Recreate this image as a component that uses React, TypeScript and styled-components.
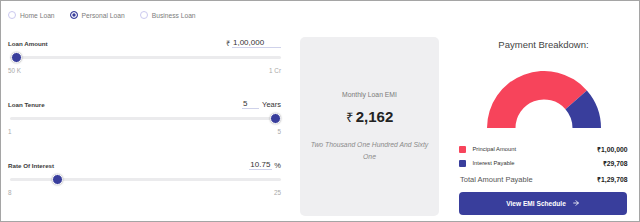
import React, { useState } from "react";
import styled, { createGlobalStyle } from "styled-components";
import { ArrowRight } from "lucide-react";

const GlobalStyle = createGlobalStyle`
  html, body { margin: 0; padding: 0; background: #ffffff; }
  body { font-family: "Liberation Sans", Arial, sans-serif; }
  * { box-sizing: border-box; }
`;

const BLUE = "#393e9c";
const RED = "#f7445b";

const Frame = styled.div`
  width: 640px;
  height: 222px;
  border: 1px solid #a5a5a5;
  padding: 9px 11px 0 7px;
  display: flex;
  flex-direction: column;
  gap: 17px;
  background: #fff;
  overflow: hidden;
`;

const RadioRow = styled.div`
  display: flex;
  align-items: center;
  height: 10px;
  gap: 15px;
  flex-shrink: 0;
`;

const RadioOption = styled.label`
  display: flex;
  align-items: center;
  gap: 4px;
  font-size: 6.7px;
  color: #7c7c7c;
  cursor: pointer;
`;

const RadioDot = styled.span<{ $checked: boolean }>`
  width: 8px;
  height: 8px;
  border-radius: 50%;
  border: ${(p) => (p.$checked ? `1.5px solid ${BLUE}` : "1px solid #cbc9ef")};
  background: ${(p) => (p.$checked ? BLUE : "#fff")};
  box-shadow: ${(p) => (p.$checked ? "inset 0 0 0 1.3px #fff" : "none")};
`;

const Main = styled.div`
  display: flex;
  height: 179px;
  flex-shrink: 0;
`;

const LeftCol = styled.div`
  width: 273px;
  padding-top: 1px;
  display: flex;
  flex-direction: column;
`;

const Section = styled.div`
  height: 61px;
  flex-shrink: 0;
  display: flex;
  flex-direction: column;
`;

const Header = styled.div`
  height: 10px;
  display: flex;
  align-items: center;
  justify-content: space-between;
`;

const FieldLabel = styled.span`
  font-size: 6.2px;
  font-weight: 700;
  color: #3a3a3a;
`;

const ValueGroup = styled.div<{ $gap: number }>`
  display: flex;
  align-items: center;
  height: 10px;
  gap: ${(p) => p.$gap}px;
`;

const ValueField = styled.span<{ $width: number }>`
  width: ${(p) => p.$width}px;
  height: 10px;
  border-bottom: 1px solid #cfd2ea;
  font-size: 8px;
  line-height: 9px;
  color: #333;
  padding-left: 1px;
`;

const Unit = styled.span`
  font-size: 7.5px;
  color: #333;
`;

const Rupee = styled.span`
  font-size: 7.5px;
  color: #333;
`;

const Slider = styled.input`
  -webkit-appearance: none;
  appearance: none;
  display: block;
  margin: 4px 0 0 1.5px;
  width: calc(100% - 1.5px);
  height: 11px;
  background: transparent;
  outline: none;

  &::-webkit-slider-runnable-track {
    height: 3px;
    background: #ebebed;
    border-radius: 2px;
  }
  &::-webkit-slider-thumb {
    -webkit-appearance: none;
    width: 11px;
    height: 11px;
    margin-top: -4px;
    border-radius: 50%;
    background: ${BLUE};
    border: 1.5px solid #fff;
    box-shadow: 0 0 2px rgba(0, 0, 0, 0.35);
  }
`;

const RangeLabels = styled.div`
  margin-top: 4px;
  height: 8px;
  display: flex;
  justify-content: space-between;
  font-size: 6.3px;
  line-height: 8px;
  color: #a9a9a9;
`;

const EmiCard = styled.div`
  width: 139px;
  height: 179px;
  margin-left: 19px;
  background: #efeff1;
  border-radius: 5px;
  display: flex;
  flex-direction: column;
  align-items: center;
  justify-content: center;
  text-align: center;
  padding: 0 8px;
`;

const EmiLabel = styled.div`
  font-size: 6.8px;
  line-height: 9px;
  color: #7a7a7a;
`;

const EmiAmount = styled.div`
  margin-top: 9px;
  font-size: 15px;
  line-height: 18px;
  font-weight: 700;
  color: #222;
`;

const EmiRupee = styled.span`
  font-weight: 400;
  font-size: 13px;
  margin-right: 3px;
`;

const EmiWords = styled.div`
  margin-top: 12px;
  font-size: 6.8px;
  line-height: 11.7px;
  font-style: italic;
  color: #8a8a8a;
`;

const RightCol = styled.div`
  width: 169px;
  margin-left: 20px;
  display: flex;
  flex-direction: column;
`;

const Title = styled.div`
  margin-top: 1.5px;
  text-align: center;
  font-size: 9.5px;
  line-height: 12px;
  color: #444;
`;

const DonutSvg = styled.svg`
  display: block;
  margin: 20px auto 0;
`;

const LegendRow = styled.div<{ $top: number; $height?: number }>`
  margin-top: ${(p) => p.$top}px;
  height: ${(p) => p.$height ?? 10}px;
  display: flex;
  align-items: center;
`;

const Swatch = styled.span<{ $color: string }>`
  width: 7px;
  height: 7px;
  border-radius: 1px;
  background: ${(p) => p.$color};
  margin-left: -0.5px;
`;

const LegendLabel = styled.span`
  flex: 1;
  margin-left: 7px;
  font-size: 5.8px;
  color: #333;
`;

const TotalLabel = styled.span`
  flex: 1;
  margin-left: 1px;
  font-size: 7.5px;
  color: #555;
`;

const LegendValue = styled.span`
  font-size: 6.8px;
  font-weight: 700;
  color: #222;
  margin-right: 0.5px;
`;

const ScheduleButton = styled.button`
  margin-top: 6.7px;
  width: 168px;
  height: 23px;
  border: none;
  border-radius: 4px;
  background: ${BLUE};
  color: #fff;
  font-family: "Liberation Sans", Arial, sans-serif;
  font-size: 6.6px;
  font-weight: 700;
  display: flex;
  align-items: center;
  justify-content: center;
  gap: 6px;
  cursor: pointer;
  padding: 0;
`;

type LoanType = "home" | "personal" | "business";

const loanTypes: { id: LoanType; label: string }[] = [
  { id: "home", label: "Home Loan" },
  { id: "personal", label: "Personal Loan" },
  { id: "business", label: "Business Loan" },
];

function arcPoint(cx: number, cy: number, r: number, deg: number) {
  const a = (deg * Math.PI) / 180;
  return [cx + r * Math.cos(a), cy - r * Math.sin(a)];
}

function ringSegment(cx: number, cy: number, R: number, r: number, from: number, to: number) {
  const [x1, y1] = arcPoint(cx, cy, R, from);
  const [x2, y2] = arcPoint(cx, cy, R, to);
  const [x3, y3] = arcPoint(cx, cy, r, to);
  const [x4, y4] = arcPoint(cx, cy, r, from);
  return `M${x1} ${y1} A${R} ${R} 0 0 1 ${x2} ${y2} L${x3} ${y3} A${r} ${r} 0 0 0 ${x4} ${y4} Z`;
}

const HalfDonut: React.FC<{ principal: number; interest: number }> = ({ principal, interest }) => {
  const R = 57;
  const r = 28.5;
  const split = 180 - (principal / (principal + interest)) * 180;
  return (
    <DonutSvg width={114} height={57} viewBox="0 0 114 57">
      <path d={ringSegment(57, 57, R, r, 180, split)} fill={RED} />
      <path d={ringSegment(57, 57, R, r, split, 0)} fill={BLUE} />
    </DonutSvg>
  );
};

export default function App() {
  const [loanType, setLoanType] = useState<LoanType>("personal");
  const [amount, setAmount] = useState(100000);
  const [tenure, setTenure] = useState(5);
  const [rate, setRate] = useState(10.75);

  return (
    <>
      <GlobalStyle />
      <Frame>
        <RadioRow>
          {loanTypes.map((t) => (
            <RadioOption key={t.id} onClick={() => setLoanType(t.id)}>
              <RadioDot $checked={loanType === t.id} />
              {t.label}
            </RadioOption>
          ))}
        </RadioRow>
        <Main>
          <LeftCol>
            <Section>
              <Header>
                <FieldLabel>Loan Amount</FieldLabel>
                <ValueGroup $gap={2}>
                  <Rupee>₹</Rupee>
                  <ValueField $width={49}>1,00,000</ValueField>
                </ValueGroup>
              </Header>
              <Slider
                type="range"
                min={50000}
                max={10000000}
                step={1000}
                value={amount}
                onChange={(e) => setAmount(Number(e.target.value))}
              />
              <RangeLabels>
                <span>50 K</span>
                <span>1 Cr</span>
              </RangeLabels>
            </Section>
            <Section>
              <Header>
                <FieldLabel>Loan Tenure</FieldLabel>
                <ValueGroup $gap={3}>
                  <ValueField $width={17}>5</ValueField>
                  <Unit>Years</Unit>
                </ValueGroup>
              </Header>
              <Slider
                type="range"
                min={1}
                max={5}
                step={1}
                value={tenure}
                onChange={(e) => setTenure(Number(e.target.value))}
              />
              <RangeLabels>
                <span>1</span>
                <span>5</span>
              </RangeLabels>
            </Section>
            <Section>
              <Header>
                <FieldLabel>Rate Of Interest</FieldLabel>
                <ValueGroup $gap={2}>
                  <ValueField $width={23}>10.75</ValueField>
                  <Unit>%</Unit>
                </ValueGroup>
              </Header>
              <Slider
                type="range"
                min={8}
                max={25}
                step={0.05}
                value={rate}
                onChange={(e) => setRate(Number(e.target.value))}
              />
              <RangeLabels>
                <span>8</span>
                <span>25</span>
              </RangeLabels>
            </Section>
          </LeftCol>

          <EmiCard>
            <EmiLabel>Monthly Loan EMI</EmiLabel>
            <EmiAmount>
              <EmiRupee>₹</EmiRupee>2,162
            </EmiAmount>
            <EmiWords>Two Thousand One Hundred And Sixty One</EmiWords>
          </EmiCard>

          <RightCol>
            <Title>Payment Breakdown:</Title>
            <HalfDonut principal={100000} interest={29708} />
            <LegendRow $top={16.5}>
              <Swatch $color={RED} />
              <LegendLabel>Principal Amount</LegendLabel>
              <LegendValue>₹1,00,000</LegendValue>
            </LegendRow>
            <LegendRow $top={4.3}>
              <Swatch $color={BLUE} />
              <LegendLabel>Interest Payable</LegendLabel>
              <LegendValue>₹29,708</LegendValue>
            </LegendRow>
            <LegendRow $top={5} $height={12}>
              <TotalLabel>Total Amount Payable</TotalLabel>
              <LegendValue>₹1,29,708</LegendValue>
            </LegendRow>
            <ScheduleButton type="button">
              View EMI Schedule
              <ArrowRight size={8} strokeWidth={2.5} />
            </ScheduleButton>
          </RightCol>
        </Main>
      </Frame>
    </>
  );
}
